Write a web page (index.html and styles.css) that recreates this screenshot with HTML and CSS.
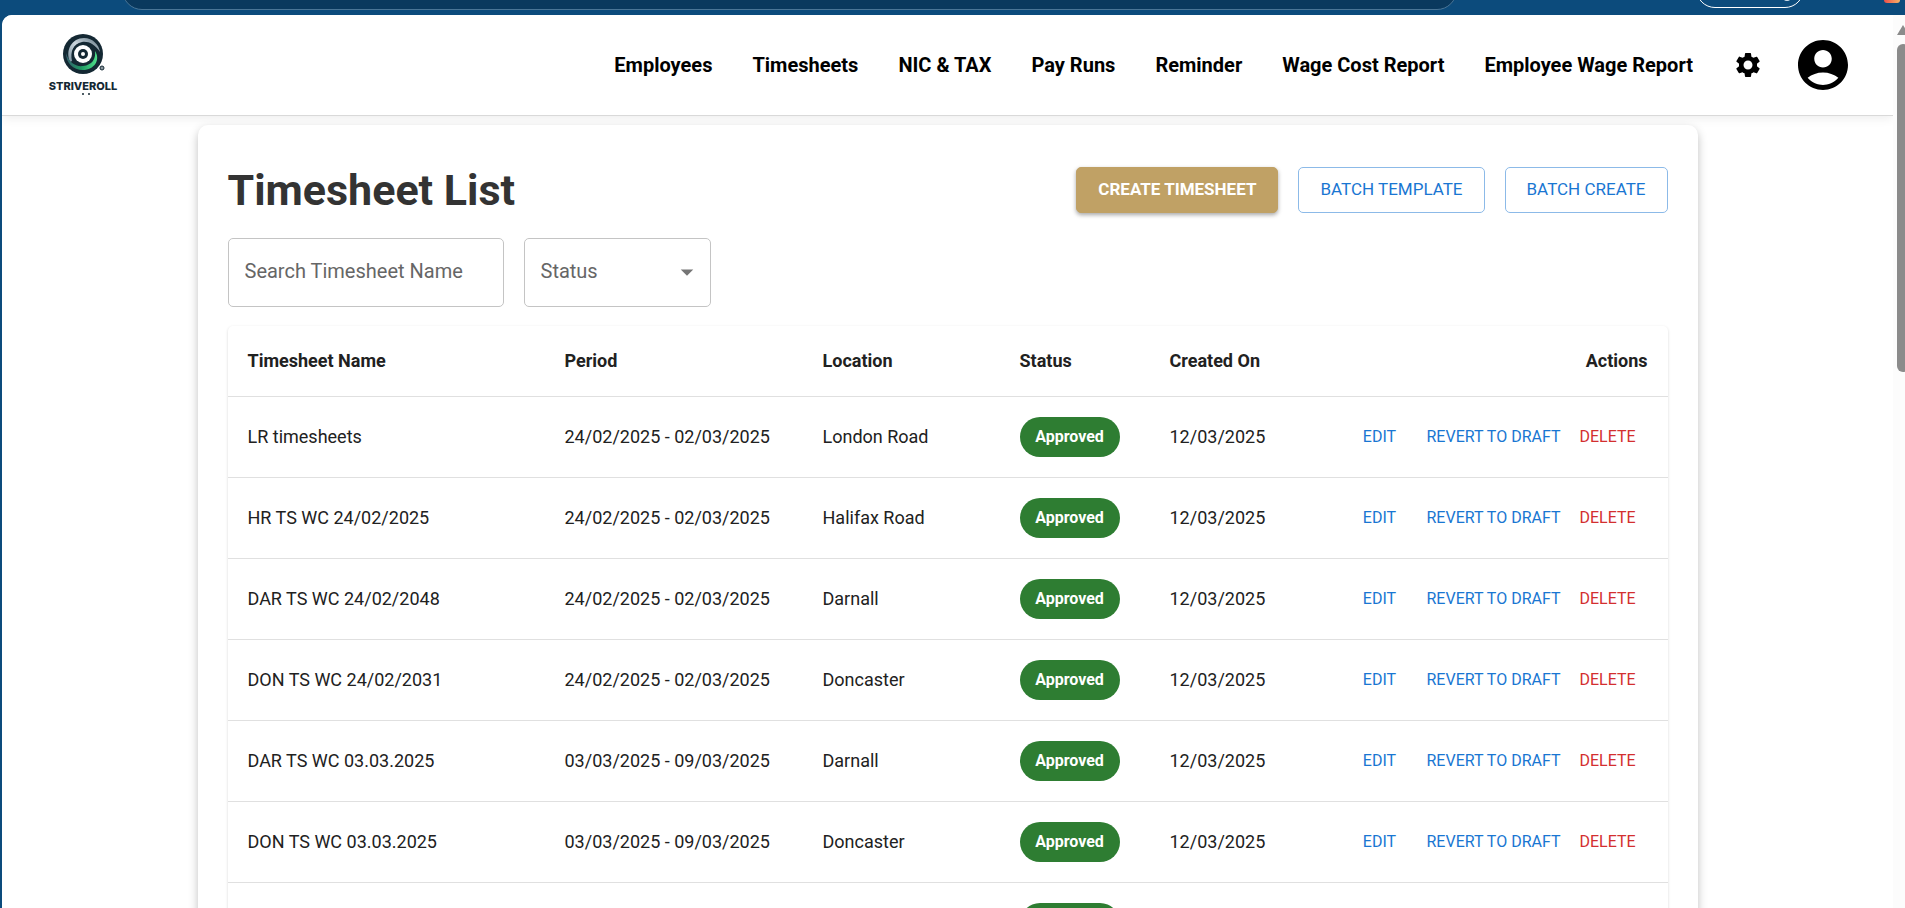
FILE: index.html
```html
<!DOCTYPE html>
<html lang="en">
<head>
    <meta charset="UTF-8">
    <meta name="viewport" content="width=device-width, initial-scale=1.0">
    <title>Timesheet List - Striveroll</title>
    <link rel="stylesheet" href="styles.css">
</head>
<body>
    <div class="browser">
        <div class="browser-bar">
            <div class="address"></div>
            <div class="profile"><span class="profile-dot"></span></div>
            <div class="extension"></div>
        </div>

        <div class="window">
            <div class="page">
                <header class="header">
                    <a class="logo" href="#" aria-label="Striveroll home">
                        <svg width="72" height="64" viewBox="0 0 72 64">
                            <defs>
                                <linearGradient id="silver" x1="0" y1="1" x2="1" y2="0">
                                    <stop offset="0" stop-color="#7d93a1"/>
                                    <stop offset="0.5" stop-color="#cbd5dc"/>
                                    <stop offset="1" stop-color="#5d7482"/>
                                </linearGradient>
                                <linearGradient id="green" x1="0" y1="0" x2="1" y2="0">
                                    <stop offset="0" stop-color="#34606e"/>
                                    <stop offset="0.5" stop-color="#1f9a63"/>
                                    <stop offset="1" stop-color="#4fe08a"/>
                                </linearGradient>
                            </defs>
                            <circle cx="36" cy="21" r="20" fill="#142833"/>
                            <path d="M23 29C18 17 25 5 37 5C46 5 52 12 53 19C48 11 41 8 35 9C26 11 23 19 25 28Z" fill="url(#silver)"/>
                            <path d="M19 20C22 30 29 34 36 33C45 32 49 26 48 18C54 27 47 37 36 37C26 37 19 30 19 20Z" fill="url(#green)"/>
                            <circle cx="36" cy="21" r="11" fill="#142833"/>
                            <circle cx="36" cy="21" r="9" fill="#fff"/>
                            <circle cx="36" cy="21" r="5" fill="#142833"/>
                            <circle cx="36" cy="21" r="2" fill="#fff"/>
                            <circle cx="55" cy="35" r="2" fill="#8b989f" stroke="#142833"/>
                            <text class="logo-text" x="36" y="57" text-anchor="middle">STRIVEROLL</text>
                            <circle cx="36" cy="61" r="1" fill="#142833"/>
                            <circle cx="42" cy="61" r="1" fill="#142833"/>
                        </svg>
                    </a>
                    <nav class="nav">
                        <a href="#">Employees</a>
                        <a href="#">Timesheets</a>
                        <a href="#">NIC &amp; TAX</a>
                        <a href="#">Pay Runs</a>
                        <a href="#">Reminder</a>
                        <a href="#">Wage Cost Report</a>
                        <a href="#">Employee Wage Report</a>
                        <button class="icon-btn" type="button" aria-label="Settings">
                            <svg width="30" height="30" viewBox="0 0 24 24"><path d="M19.14 12.94c.04-.3.06-.61.06-.94 0-.32-.02-.64-.07-.94l2.03-1.58c.18-.14.23-.41.12-.61l-1.92-3.32c-.12-.22-.37-.29-.59-.22l-2.39.96c-.5-.38-1.03-.7-1.62-.94l-.36-2.54c-.04-.24-.24-.41-.48-.41h-3.84c-.24 0-.43.17-.47.41l-.36 2.54c-.59.24-1.13.57-1.62.94l-2.39-.96c-.22-.08-.47 0-.59.22L2.74 8.87c-.12.21-.08.47.12.61l2.03 1.58c-.05.3-.09.63-.09.94s.02.64.07.94l-2.03 1.58c-.18.14-.23.41-.12.61l1.92 3.32c.12.22.37.29.59.22l2.39-.96c.5.38 1.03.7 1.62.94l.36 2.54c.05.24.24.41.48.41h3.84c.24 0 .44-.17.47-.41l.36-2.54c.59-.24 1.13-.56 1.62-.94l2.39.96c.22.08.47 0 .59-.22l1.92-3.32c.12-.22.07-.47-.12-.61l-2.01-1.58zM12 15.6c-1.98 0-3.6-1.62-3.6-3.6s1.62-3.6 3.6-3.6 3.6 1.62 3.6 3.6-1.62 3.6-3.6 3.6z"/></svg>
                        </button>
                        <button class="icon-btn account" type="button" aria-label="Account">
                            <svg width="60" height="60" viewBox="0 0 24 24"><path d="M12 2C6.48 2 2 6.48 2 12s4.48 10 10 10 10-4.48 10-10S17.52 2 12 2zm0 4c1.93 0 3.5 1.57 3.5 3.5S13.93 13 12 13s-3.5-1.57-3.5-3.5S10.07 6 12 6zm0 14c-2.03 0-4.43-.82-6.14-2.88C7.55 15.8 9.68 15 12 15s4.45.8 6.14 2.12C16.43 19.18 14.03 20 12 20z"/></svg>
                        </button>
                    </nav>
                </header>

                <main class="container">
                    <div class="title-row">
                        <h1>Timesheet List</h1>
                        <div class="buttons">
                            <button class="btn btn-gold" type="button">CREATE TIMESHEET</button>
                            <button class="btn btn-outline" type="button">BATCH TEMPLATE</button>
                            <button class="btn btn-outline" type="button">BATCH CREATE</button>
                        </div>
                    </div>

                    <div class="filters">
                        <input class="field search" type="text" placeholder="Search Timesheet Name" aria-label="Search Timesheet Name">
                        <div class="select-wrap">
                            <select class="field" aria-label="Status">
                                <option>Status</option>
                                <option>Draft</option>
                                <option>Approved</option>
                            </select>
                            <svg class="arrow" width="30" height="30" viewBox="0 0 24 24"><path d="M7 10l5 5 5-5z"/></svg>
                        </div>
                    </div>

                    <div class="table-card">
                        <table>
                            <colgroup>
                                <col class="col-name">
                                <col class="col-period">
                                <col class="col-location">
                                <col class="col-status">
                                <col class="col-created">
                                <col>
                            </colgroup>
                            <thead>
                                <tr>
                                    <th>Timesheet Name</th>
                                    <th>Period</th>
                                    <th>Location</th>
                                    <th>Status</th>
                                    <th>Created On</th>
                                    <th class="actions">Actions</th>
                                </tr>
                            </thead>
                            <tbody id="rows"></tbody>
                        </table>
                    </div>
                </main>
            </div>

            <div class="scrollbar">
                <div class="scroll-up"></div>
                <div class="scroll-thumb"></div>
            </div>
        </div>
    </div>

    <script>
        const timesheets = [
            ['LR timesheets', '24/02/2025 - 02/03/2025', 'London Road'],
            ['HR TS WC 24/02/2025', '24/02/2025 - 02/03/2025', 'Halifax Road'],
            ['DAR TS WC 24/02/2048', '24/02/2025 - 02/03/2025', 'Darnall'],
            ['DON TS WC 24/02/2031', '24/02/2025 - 02/03/2025', 'Doncaster'],
            ['DAR TS WC 03.03.2025', '03/03/2025 - 09/03/2025', 'Darnall'],
            ['DON TS WC 03.03.2025', '03/03/2025 - 09/03/2025', 'Doncaster'],
            ['HR TS WC 03.03.2025', '03/03/2025 - 09/03/2025', 'Halifax Road']
        ];

        document.getElementById('rows').innerHTML = timesheets.map(([name, period, location]) => `
            <tr>
                <td>${name}</td>
                <td>${period}</td>
                <td>${location}</td>
                <td><span class="chip">Approved</span></td>
                <td>12/03/2025</td>
                <td class="actions">
                    <div class="row-actions">
                        <button type="button">EDIT</button>
                        <button type="button">REVERT TO DRAFT</button>
                        <button class="delete" type="button">DELETE</button>
                    </div>
                </td>
            </tr>
        `).join('');
    </script>
</body>
</html>
```
FILE: styles.css
```css
* {
    box-sizing: border-box;
}
body {
    margin: 0;
    font-family: Roboto, Arial, sans-serif;
    color: #212121;
}
button, input, select {
    font-family: inherit;
}
.browser {
    display: flex;
    flex-direction: column;
    height: 100vh;
    overflow: hidden;
    background: #0c4b7c;
}

/* Browser toolbar */
.browser-bar {
    display: flex;
    align-items: flex-start;
    flex-shrink: 0;
    height: 15px;
    padding: 0 5px 0 122px;
    overflow: hidden;
}
.address {
    flex: 1;
    height: 40px;
    margin-top: -30px;
    background: #0a395e;
    border: 1px solid #4a7596;
    border-radius: 20px;
}
.profile {
    width: 108px;
    height: 38px;
    margin: -30px 80px 0 239px;
    border: 1px solid #fff;
    border-radius: 19px;
}
.profile-dot {
    display: block;
    width: 8px;
    height: 8px;
    margin: 22px 0 0 86px;
    border-radius: 50%;
    background: #d8e4ec;
}
.extension {
    width: 16px;
    height: 3px;
    border-radius: 0 0 4px 4px;
    background: linear-gradient(90deg, #ef4f4a, #f7b267);
}

/* Page area */
.window {
    display: flex;
    flex: 1;
    min-height: 0;
    margin-left: 2px;
    overflow: hidden;
    background: #fff;
    border-radius: 10px 0 0 0;
}
.page {
    flex: 1;
    overflow: hidden;
}
.scrollbar {
    width: 12px;
    padding: 10px 0 0 4px;
    overflow: hidden;
    background: #fcfcfc;
}
.scroll-up {
    width: 12px;
    height: 10px;
    background: #8b8b8b;
    clip-path: polygon(50% 0, 100% 100%, 0 100%);
}
.scroll-thumb {
    width: 12px;
    height: 328px;
    margin-top: 9px;
    border-radius: 6px;
    background: #8b8b8b;
}

.header {
    display: flex;
    align-items: center;
    justify-content: space-between;
    height: 101px;
    padding: 0 40px 0 45px;
    background: #fff;
    border-bottom: 1px solid #d9d9d9;
    box-shadow: 0 2px 10px rgba(0,0,0,0.08);
}
.logo svg {
    display: block;
}
.logo-text {
    font-family: Inter, sans-serif;
    font-size: 11px;
    font-weight: 800;
    fill: #142833;
}
.nav {
    display: flex;
    align-items: center;
    gap: 40px;
}
.nav a {
    color: #000;
    font-size: 20px;
    font-weight: 700;
    line-height: 30px;
    text-decoration: none;
    white-space: nowrap;
}
.icon-btn {
    padding: 0;
    border: none;
    background: none;
    cursor: pointer;
}
.icon-btn svg {
    display: block;
}
.account {
    margin-left: -10px;
}

.container {
    max-width: 1500px;
    margin: 9px auto 0;
    padding: 30px;
    background: #fff;
    border-radius: 10px;
    box-shadow: 0 4px 10px rgba(0,0,0,0.25);
}
.title-row {
    display: flex;
    align-items: center;
    justify-content: space-between;
    height: 70px;
    margin-bottom: 13px;
}
h1 {
    margin: 0;
    color: #333;
    font-size: 43px;
    font-weight: 700;
    line-height: 54px;
}
.buttons {
    display: flex;
    gap: 20px;
}
.btn {
    height: 46px;
    padding: 0 21px 2px;
    border: 1px solid #8cbae8;
    border-radius: 5px;
    background: #fff;
    color: #1976d2;
    font-size: 17px;
    cursor: pointer;
}
.btn-gold {
    border-color: #c0a165;
    background: #c0a165;
    color: #fff;
    font-weight: 700;
    box-shadow: 0 2px 4px rgba(0,0,0,0.35);
}

.filters {
    display: flex;
    gap: 20px;
    margin-bottom: 19px;
}
.field {
    width: 100%;
    height: 69px;
    padding: 0 16px 3px;
    border: 1px solid #c4c4c4;
    border-radius: 5px;
    background: #fff;
    color: #666;
    font-size: 20px;
    appearance: none;
}
.field::placeholder {
    color: #666;
    opacity: 1;
}
.search {
    width: 276px;
}
.select-wrap {
    position: relative;
    width: 187px;
}
.arrow {
    position: absolute;
    top: 19px;
    right: 9px;
    fill: #757575;
    pointer-events: none;
}

.table-card {
    border-radius: 5px;
    box-shadow: 0 1px 3px rgba(0,0,0,0.16);
}
table {
    width: 100%;
    table-layout: fixed;
    border-collapse: separate;
    border-spacing: 0;
}
.col-name {
    width: 317px;
}
.col-period {
    width: 258px;
}
.col-location {
    width: 197px;
}
.col-status {
    width: 150px;
}
.col-created {
    width: 140px;
}
th, td {
    padding: 20px;
    border-bottom: 1px solid #e0e0e0;
    font-size: 18px;
    line-height: 30px;
    text-align: left;
    white-space: nowrap;
}
td {
    height: 81px;
    padding: 0 20px;
}
th.actions, td.actions {
    text-align: right;
}
.chip {
    display: block;
    width: 100px;
    height: 40px;
    border-radius: 20px;
    background: #2e7d32;
    color: #fff;
    font-size: 16px;
    font-weight: 700;
    line-height: 40px;
    text-align: center;
}
.row-actions {
    display: flex;
    justify-content: flex-end;
}
.row-actions button {
    min-width: 80px;
    padding: 5px 7px;
    border: none;
    background: none;
    color: #1976d2;
    font-size: 16px;
    line-height: 28px;
    cursor: pointer;
}
.row-actions .delete {
    color: #d32f2f;
}
```
